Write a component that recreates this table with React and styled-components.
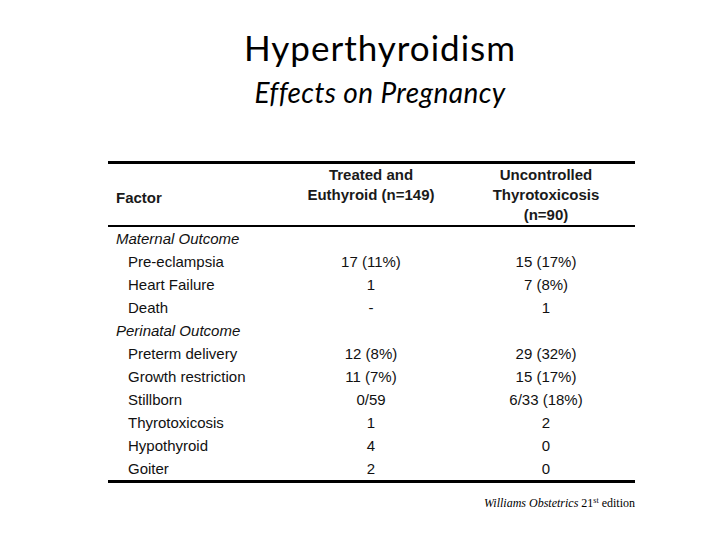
import React from "react";
import styled, { createGlobalStyle } from "styled-components";

const GlobalStyle = createGlobalStyle`
  html, body {
    margin: 0;
    padding: 0;
    background: #fff;
  }
`;

const sections = [
  {
    label: "Maternal Outcome",
    rows: [
      ["Pre-eclampsia", "17 (11%)", "15 (17%)"],
      ["Heart Failure", "1", "7 (8%)"],
      ["Death", "-", "1"],
    ],
  },
  {
    label: "Perinatal Outcome",
    rows: [
      ["Preterm delivery", "12 (8%)", "29 (32%)"],
      ["Growth restriction", "11 (7%)", "15 (17%)"],
      ["Stillborn", "0/59", "6/33 (18%)"],
      ["Thyrotoxicosis", "1", "2"],
      ["Hypothyroid", "4", "0"],
      ["Goiter", "2", "0"],
    ],
  },
];

export default function App() {
  return (
    <Slide>
      <GlobalStyle />
      <Heading>
        <Title>Hyperthyroidism</Title>
        <Subtitle>Effects on Pregnancy</Subtitle>
      </Heading>

      <Table>
        <HeadRow>
          <HeadCell $align="left" $offset={6}>
            Factor
          </HeadCell>
          <HeadCell>
            Treated and
            <br />
            Euthyroid (n=149)
          </HeadCell>
          <HeadCell $last>
            Uncontrolled
            <br />
            Thyrotoxicosis
            <br />
            (n=90)
          </HeadCell>
        </HeadRow>

        <Body>
          {sections.map((section) => (
            <React.Fragment key={section.label}>
              <Row>
                <SectionLabel>{section.label}</SectionLabel>
                <Cell />
                <Cell $last />
              </Row>
              {section.rows.map(([name, treated, uncontrolled]) => (
                <Row key={name}>
                  <Factor>{name}</Factor>
                  <Cell>{treated}</Cell>
                  <Cell $last>{uncontrolled}</Cell>
                </Row>
              ))}
            </React.Fragment>
          ))}
        </Body>
      </Table>

      <Source>
        <i>Williams Obstetrics</i> 21<sup>st</sup> edition
      </Source>
    </Slide>
  );
}

const Slide = styled.div`
  width: 720px;
  height: 540px;
  box-sizing: border-box;
  padding-top: 27px;
  background: #fff;
  color: #000;
  overflow: hidden;
`;

const Heading = styled.div`
  display: flex;
  flex-direction: column;
  align-items: center;
  padding-left: 40px;
  height: 84px;
  font-family: Lato, "Open Sans", sans-serif;
`;

const Title = styled.div`
  font-size: 35px;
  line-height: 40px;
  letter-spacing: 1px;
  font-weight: 400;
`;

const Subtitle = styled.div`
  margin-top: 9px;
  font-size: 28px;
  line-height: 32px;
  letter-spacing: 0.4px;
  font-style: italic;
`;

const Table = styled.div`
  width: 527px;
  margin: 50px 0 0 108px;
  border-top: 3px solid #000;
  border-bottom: 3px solid #000;
  font-family: "Liberation Sans", Arial, sans-serif;
  font-size: 15px;
  color: #111;
`;

const HeadRow = styled.div`
  display: grid;
  grid-template-columns: 172px 182px 1fr;
  height: 63px;
  box-sizing: border-box;
  padding-top: 1px;
  border-bottom: 2px solid #000;
`;

const HeadCell = styled.div`
  align-self: ${(p) => (p.$align === "left" ? "center" : "start")};
  padding-top: ${(p) => p.$offset || 0}px;
  padding-left: ${(p) => (p.$align === "left" ? "8px" : "0")};
  padding-right: ${(p) => (p.$last ? "5px" : "0")};
  text-align: ${(p) => p.$align || "center"};
  font-weight: 700;
  line-height: 20px;
  color: #1a1a1a;
`;

const Body = styled.div`
  display: flex;
  flex-direction: column;
`;

const Row = styled.div`
  display: grid;
  grid-template-columns: 172px 182px 1fr;
  height: 23px;
  line-height: 23px;
`;

const SectionLabel = styled.div`
  padding-left: 8px;
  font-style: italic;
  white-space: nowrap;
`;

const Factor = styled.div`
  padding-left: 20px;
  white-space: nowrap;
`;

const Cell = styled.div`
  text-align: center;
  padding-right: ${(p) => (p.$last ? "5px" : "0")};
`;

const Source = styled.div`
  width: 527px;
  margin: 13px 0 0 108px;
  text-align: right;
  font-family: "Liberation Serif", "Times New Roman", serif;
  font-size: 12px;
  line-height: 14px;

  & sup {
    font-size: 8px;
    line-height: 0;
    vertical-align: 4px;
  }
`;
